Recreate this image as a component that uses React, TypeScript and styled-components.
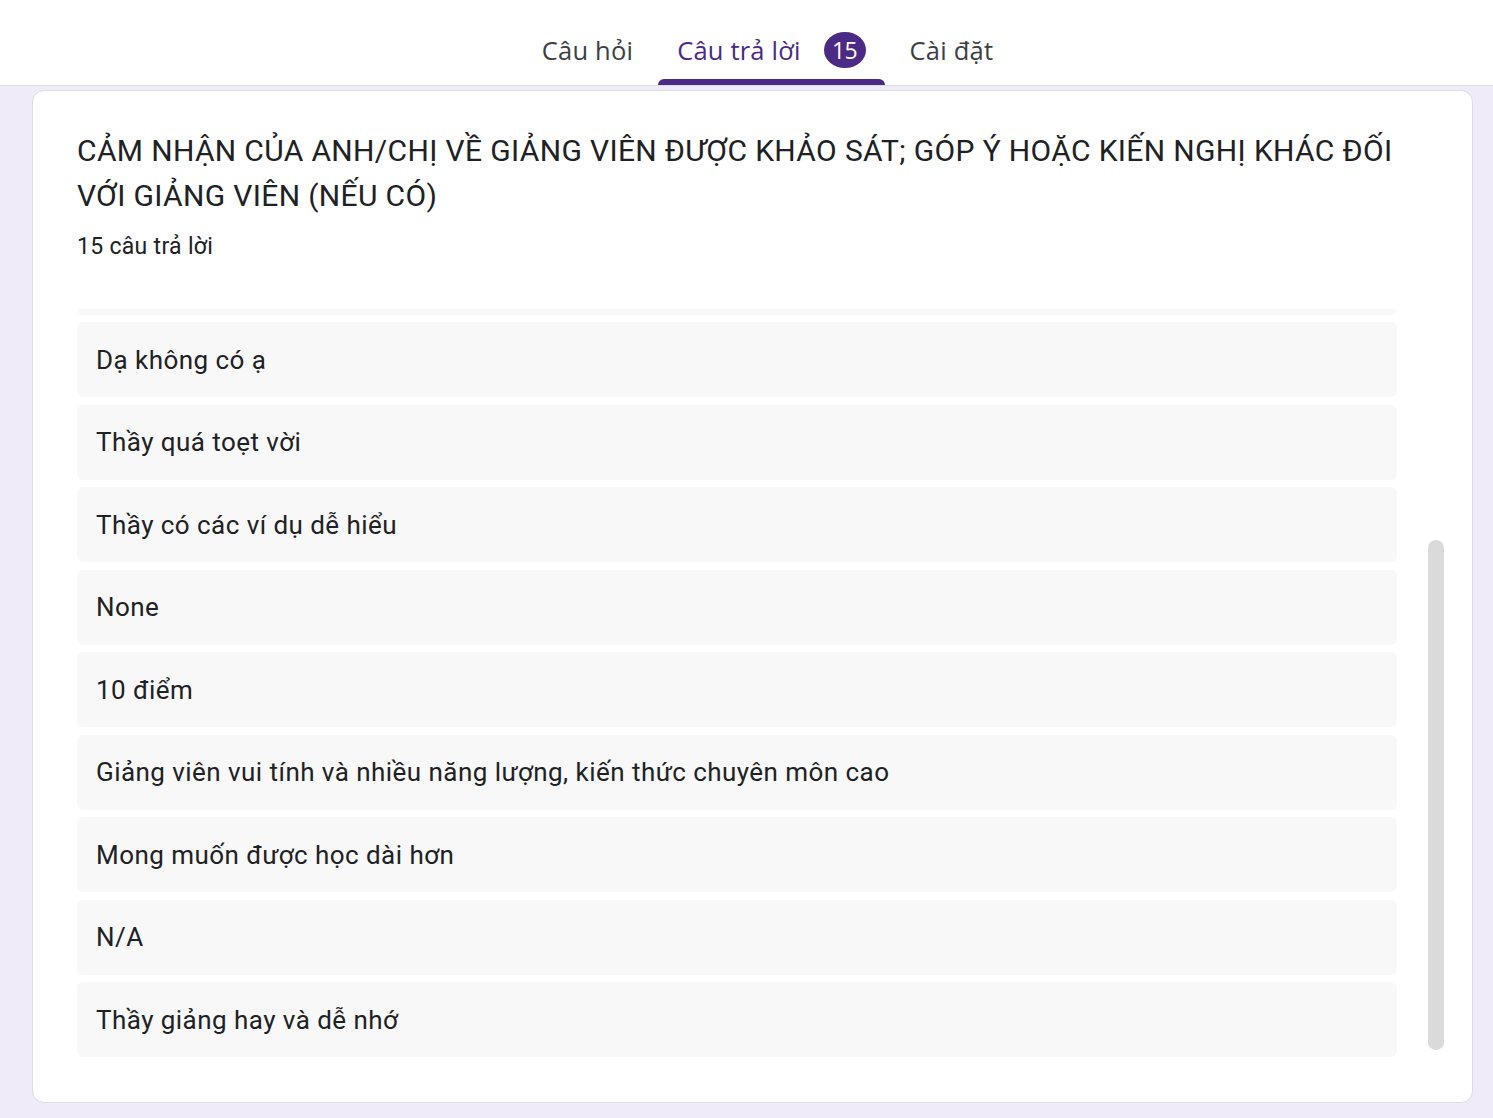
import styled, { createGlobalStyle } from 'styled-components'

const GlobalStyle = createGlobalStyle`
	html, body {
		margin: 0;
		padding: 0;
		background: #f0ebf8;
		font-family: Roboto, 'Noto Sans', Arial, sans-serif;
	}
	* {
		box-sizing: border-box;
	}
`

const Page = styled.div`
	min-height: 1118px;
	background: #f0ebf8;
	display: flex;
	flex-direction: column;
`

const TopBar = styled.header`
	height: 86px;
	background: #fff;
	border-bottom: 1px solid #dadce0;
	display: flex;
	justify-content: center;
	align-items: flex-end;
`

const TabList = styled.nav`
	display: flex;
	gap: 6px;
	margin-left: 42px;
`

const Tab = styled.div<{ $active?: boolean }>`
	position: relative;
	height: 85px;
	padding: 15px 19px 0;
	display: flex;
	align-items: center;
	gap: 23px;
	font-family: 'Open Sans', 'Noto Sans', sans-serif;
	font-size: 25.5px;
	letter-spacing: 0.2px;
	color: ${p => (p.$active ? '#4a2a86' : '#3c4043')};

	&::after {
		content: '';
		display: ${p => (p.$active ? 'block' : 'none')};
		position: absolute;
		left: 0;
		right: 0;
		bottom: 0;
		height: 6px;
		background: #4b2a86;
		border-radius: 6px 6px 0 0;
	}
`

const Badge = styled.span`
	width: 42px;
	height: 36px;
	border-radius: 50%;
	background: #4b2a86;
	color: #fff;
	font-size: 23px;
	display: flex;
	align-items: center;
	justify-content: center;
	font-family: 'Open Sans', sans-serif;
	letter-spacing: -0.5px;
`

const Card = styled.section`
	margin: 4px 20px 15px 32px;
	background: #fff;
	border: 1px solid #dadce0;
	border-radius: 12px;
	padding: 37px 28px 45px 44px;
	display: flex;
	flex-direction: column;
`

const Title = styled.h2`
	margin: 0;
	font-weight: 400;
	font-size: 30px;
	line-height: 45px;
	color: #202124;
	letter-spacing: 0.35px;
`

const Subtitle = styled.div`
	margin-top: 15px;
	font-size: 23px;
	line-height: 28px;
	color: #202124;
	letter-spacing: 0.3px;
`

const AnswerArea = styled.div`
	margin-top: 48px;
	display: flex;
	gap: 31px;
	height: 748px;
`

const AnswerViewport = styled.div`
	flex: 1;
	overflow: hidden;
	display: flex;
	flex-direction: column;
	justify-content: flex-end;
	gap: 7.5px;
`

const Answer = styled.div`
	flex: 0 0 75px;
	background: #f8f8f8;
	border-radius: 6px;
	display: flex;
	align-items: center;
	padding: 0 19px;
	font-size: 26px;
	color: #202124;
	letter-spacing: 0.45px;
`

const ScrollTrack = styled.div`
	width: 16px;
	display: flex;
	flex-direction: column;
	justify-content: flex-end;
	padding-bottom: 7px;
`

const ScrollThumb = styled.div`
	height: 510px;
	background: #dadada;
	border-radius: 8px;
`

const answers = [
	'Không có',
	'Thầy dạy rất nhiệt tình',
	'Không',
	'Giảng viên nhiệt tình, dễ hiểu',
	'Tốt',
	'Không có ý kiến',
	'Dạ không có ạ',
	'Thầy quá toẹt vời',
	'Thầy có các ví dụ dễ hiểu',
	'None',
	'10 điểm',
	'Giảng viên vui tính và nhiều năng lượng, kiến thức chuyên môn cao',
	'Mong muốn được học dài hơn',
	'N/A',
	'Thầy giảng hay và dễ nhớ',
]

const App = () => {
	return (
		<Page>
			<GlobalStyle />
			<TopBar>
				<TabList>
					<Tab>Câu hỏi</Tab>
					<Tab $active>
						Câu trả lời
						<Badge>15</Badge>
					</Tab>
					<Tab>Cài đặt</Tab>
				</TabList>
			</TopBar>
			<Card>
				<Title>
					CẢM NHẬN CỦA ANH/CHỊ VỀ GIẢNG VIÊN ĐƯỢC KHẢO SÁT; GÓP Ý HOẶC KIẾN NGHỊ KHÁC ĐỐI VỚI GIẢNG VIÊN (NẾU CÓ)
				</Title>
				<Subtitle>15 câu trả lời</Subtitle>
				<AnswerArea>
					<AnswerViewport>
						{answers.map((a, i) => (
							<Answer key={i}>{a}</Answer>
						))}
					</AnswerViewport>
					<ScrollTrack>
						<ScrollThumb />
					</ScrollTrack>
				</AnswerArea>
			</Card>
		</Page>
	)
}

export default App
